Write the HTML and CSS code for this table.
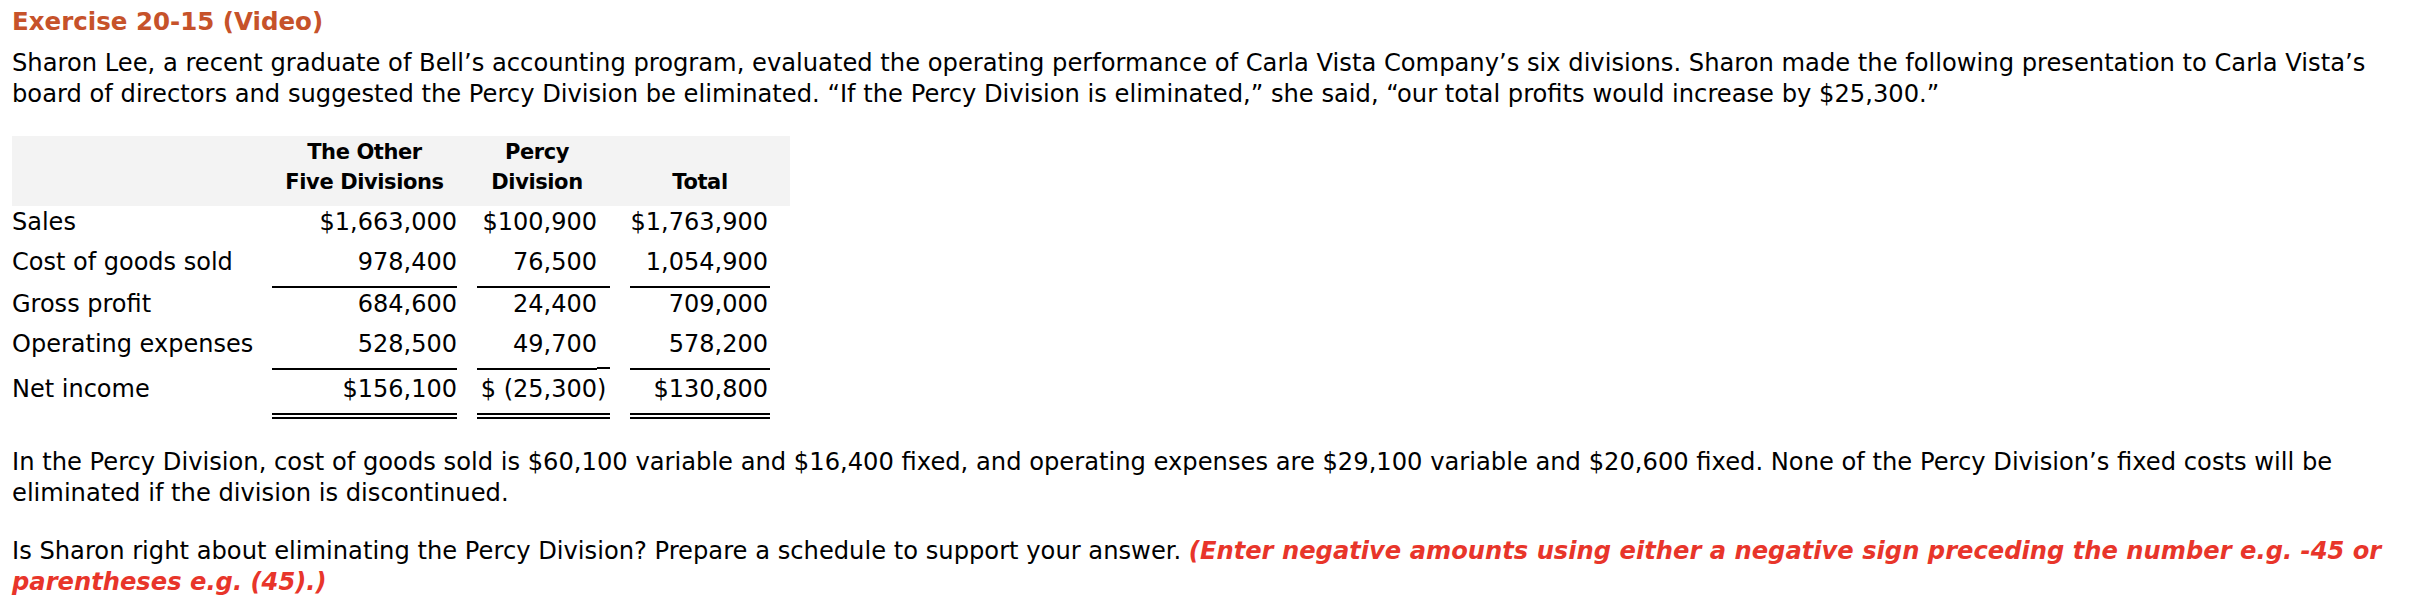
FILE: index.html
```html
<!DOCTYPE html>
<html lang="en">
<head>
<meta charset="utf-8">
<title>Exercise 20-15 (Video)</title>
<link rel="stylesheet" href="styles.css">
</head>
<body>
<div class="page">
  <h1 class="title">Exercise 20-15 (Video)</h1>
  <p class="intro">Sharon Lee, a recent graduate of Bell’s accounting program, evaluated the operating performance of Carla Vista Company’s six divisions. Sharon made the following presentation to Carla Vista’s board of directors and suggested the Percy Division be eliminated. “If the Percy Division is eliminated,” she said, “our total profits would increase by $25,300.”</p>

  <div class="schedule">
    <div class="row head">
      <div class="h lbl"></div>
      <div class="h">The Other<br>Five Divisions</div>
      <div class="h c2">Percy<br>Division</div>
      <div class="h">Total</div>
    </div>
    <div class="row data">
      <div class="lbl">Sales</div>
      <div class="num">$1,663,000</div>
      <div class="num c2">$100,900</div>
      <div class="num c3">$1,763,900</div>
    </div>
    <div class="row data">
      <div class="lbl">Cost of goods sold</div>
      <div class="num ul">978,400</div>
      <div class="num c2 ul">76,500</div>
      <div class="num c3 ul">1,054,900</div>
    </div>
    <div class="row data">
      <div class="lbl">Gross profit</div>
      <div class="num">684,600</div>
      <div class="num c2">24,400</div>
      <div class="num c3">709,000</div>
    </div>
    <div class="row data">
      <div class="lbl">Operating expenses</div>
      <div class="num ul">528,500</div>
      <div class="split"><span class="amt">49,700</span><span class="rp raised"></span></div>
      <div class="num c3 ul">578,200</div>
    </div>
    <div class="row data net">
      <div class="lbl">Net income</div>
      <div class="num dbl">$156,100</div>
      <div class="paren dbl"><span class="amt">$ (25,300</span><span class="rp">)</span></div>
      <div class="num c3 dbl">$130,800</div>
    </div>
  </div>

  <p class="para2">In the Percy Division, cost of goods sold is $60,100 variable and $16,400 fixed, and operating expenses are $29,100 variable and $20,600 fixed. None of the Percy Division’s fixed costs will be eliminated if the division is discontinued.</p>

  <p class="para3">Is Sharon right about eliminating the Percy Division? Prepare a schedule to support your answer. <span class="note">(Enter negative amounts using either a negative sign preceding the number e.g. -45 or parentheses e.g. (45).)</span></p>
</div>
</body>
</html>
```

FILE: styles.css
```css
html, body {
  margin: 0;
  padding: 0;
  background: #ffffff;
}

body {
  font-family: "DejaVu Sans", Verdana, sans-serif;
  font-size: 24px;
  color: #000000;
}

.page {
  padding: 6px 12px 0 12px;
}

.title {
  margin: 0;
  font-size: 24.5px;
  line-height: 31px;
  font-weight: bold;
  color: #c6522a;
}

p {
  margin: 0;
  font-size: 24.2px;
  line-height: 31px;
}

.intro {
  margin-top: 11px;
}

.schedule {
  margin-top: 26px;
}

.row {
  display: grid;
  grid-template-columns: 240px 185px 133px 140px;
  column-gap: 20px;
  padding-right: 20px;
  width: max-content;
}

.head {
  background: #f3f3f3;
  font-weight: bold;
  font-size: 21px;
  letter-spacing: -0.4px;
  line-height: 30px;
  padding-top: 1px;
  padding-bottom: 9px;
}

.head .h {
  text-align: center;
  align-self: end;
  white-space: nowrap;
}

.head .c2 {
  padding-right: 13px;
}

.data {
  line-height: 32px;
}

.data > div {
  padding-bottom: 8px;
  white-space: nowrap;
}

.net > div {
  padding-top: 3px;
}

.num {
  text-align: right;
}

.c2 {
  padding-right: 13px;
}

.c3 {
  padding-right: 2px;
}

.ul {
  border-bottom: 2px solid #000000;
}

.dbl {
  border-bottom: 6px double #000000;
}

.split,
.paren {
  display: flex;
}

.data > .split {
  padding-bottom: 0;
}

.amt {
  flex: 1;
  text-align: right;
}

.rp {
  width: 13px;
  text-align: left;
}

.split .amt,
.split .rp {
  padding-bottom: 8px;
  border-bottom: 2px solid #000000;
}

.split .raised {
  margin-bottom: 1px;
}

.para2 {
  margin-top: 28px;
}

.para3 {
  margin-top: 27px;
}

.note {
  color: #e8352a;
  font-weight: bold;
  font-style: italic;
}
```
